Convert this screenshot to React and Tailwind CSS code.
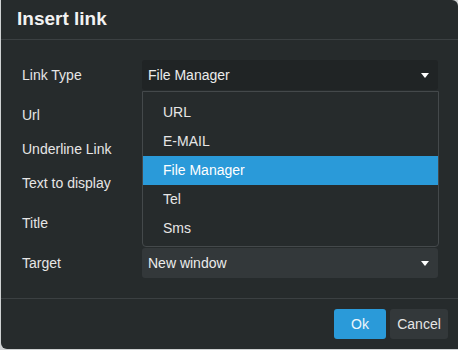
const Caret = () => (
    <svg width="8" height="5" viewBox="0 0 8 5" className="fill-white">
        <path d="M0 0h8L4 5z" />
    </svg>
)

const Row = ({ label, children }) => (
    <div className="flex items-center">
        <div className="w-[120px] shrink-0 text-[14px] text-[#e6e6e6]">{label}</div>
        <div className="flex-1">{children}</div>
    </div>
)

const options = ['URL', 'E-MAIL', 'File Manager', 'Tel', 'Sms']

export default function App() {
    return (
        <div className="w-[458px] h-[350px] bg-[#cfd2d3] pl-[1px] pb-[1px]" style={{ fontFamily: '"Liberation Sans", Arial, sans-serif' }}>
            <div className="relative w-[457px] h-[349px] bg-[#262b2c] rounded-tr-[6px] rounded-bl-[6px] flex flex-col">
                {/* header */}
                <div className="h-[40px] border-b border-[#3b4042] flex items-center px-[16px]">
                    <h1 className="text-[19px] font-bold text-[#f2f2f2]">Insert link</h1>
                </div>

                {/* body */}
                <div className="flex-1 pl-[21px] pr-[20px] pt-[20px]">
                    <Row label="Link Type">
                        <div className="h-[30px] w-full bg-[#202425] rounded-[3px] flex items-center justify-between pl-[6px] pr-[9px] text-[14px] text-[#ececec]">
                            <span>File Manager</span>
                            <Caret />
                        </div>
                    </Row>
                    <div className="h-[158px]" />
                    <Row label="Target">
                        <div className="h-[30px] w-full bg-[#33383a] rounded-[3px] flex items-center justify-between pl-[6px] pr-[9px] text-[14px] text-[#ececec]">
                            <span>New window</span>
                            <Caret />
                        </div>
                    </Row>
                </div>

                {/* labels hidden behind the open list */}
                <div className="absolute left-[21px] top-[105px] flex flex-col text-[14px] text-[#e6e6e6]">
                    <span className="h-[20px] leading-[20px]">Url</span>
                    <span className="h-[20px] leading-[20px] mt-[14px]">Underline Link</span>
                    <span className="h-[20px] leading-[20px] mt-[14px]">Text to display</span>
                    <span className="h-[20px] leading-[20px] mt-[20px]">Title</span>
                </div>

                {/* open dropdown */}
                <div className="absolute left-[141px] top-[91px] w-[297px] h-[156px] border border-[#44494b] rounded-b-[4px] bg-[#262b2c] py-[6px]">
                    {options.map((o) => (
                        <div
                            key={o}
                            className={`h-[29px] flex items-center pl-[20px] text-[14px] ${o === 'File Manager' ? 'bg-[#2a9ad9] text-white' : 'text-[#e6e6e6]'}`}
                        >
                            {o}
                        </div>
                    ))}
                </div>

                {/* footer */}
                <div className="h-[51px] border-t border-[#3b4042] flex items-center justify-end gap-[4px] pr-[10px]">
                    <button className="w-[52px] h-[30px] bg-[#2a9ad9] rounded-[3px] text-[14px] text-[#eef6fb]">Ok</button>
                    <button className="w-[58px] h-[30px] bg-[#33383a] rounded-[3px] text-[14px] text-[#e6e6e6]">Cancel</button>
                </div>
            </div>
        </div>
    )
}
